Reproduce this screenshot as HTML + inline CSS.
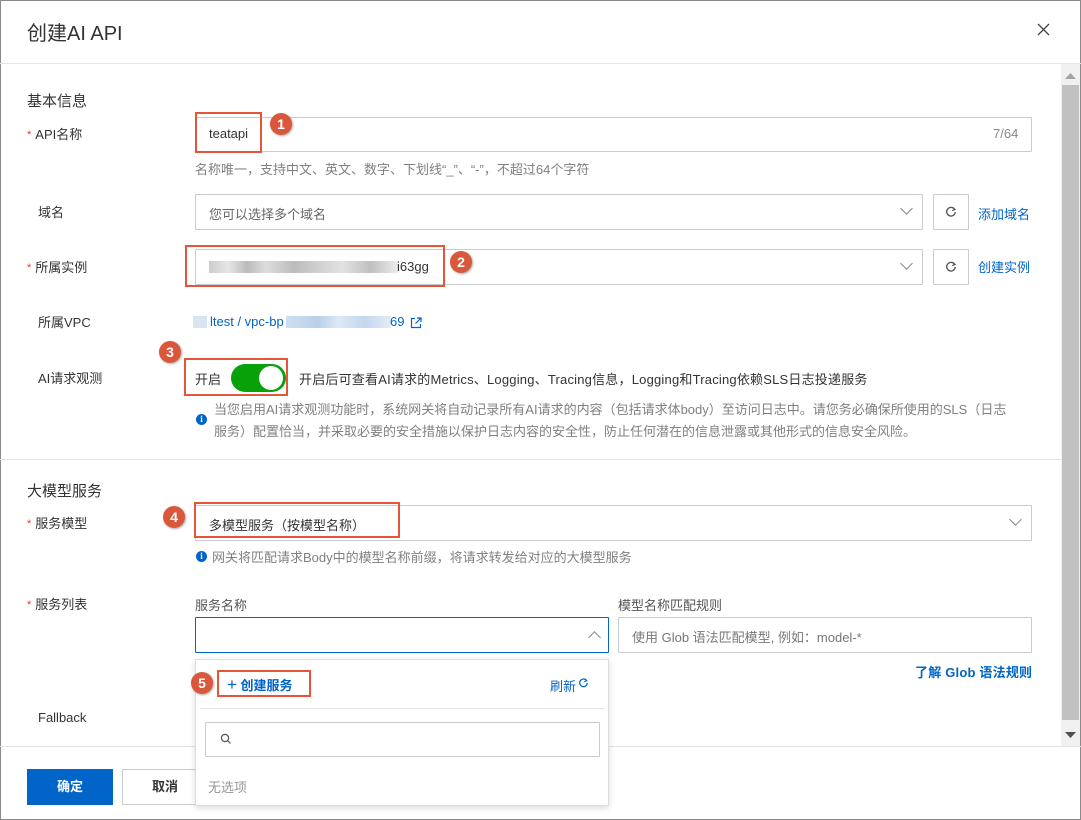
<!DOCTYPE html>
<html><head><meta charset="utf-8"><style>
*{margin:0;padding:0;box-sizing:border-box}
body{width:1081px;height:820px;overflow:hidden;background:#fff;font-family:"Liberation Sans","Noto Sans CJK SC",sans-serif;font-size:13px;color:#333;position:relative}
.a{position:absolute;white-space:nowrap}
.frame{position:absolute;left:0;top:0;width:1081px;height:820px;border:1px solid #8a8a8a}
.inp{position:absolute;border:1px solid #c8ccd2;background:#fff;border-radius:1px}
.lbl{position:absolute;font-size:13px;color:#333;line-height:16px}
.req{color:#e23b2e;font-size:11px;margin-right:4px;vertical-align:top}
.red{position:absolute;border:2px solid #e5553a}
.badge{position:absolute;width:22px;height:22px;border-radius:50%;background:#d9573b;color:#fff;font-weight:bold;font-size:14px;line-height:22px;text-align:center;box-shadow:1px 1px 2px rgba(0,0,0,.35)}
.hint{position:absolute;font-size:13px;color:#808080;white-space:nowrap}
.blue{color:#0064c8}
.chev{position:absolute;width:9px;height:9px;border-right:1.5px solid #888;border-bottom:1.5px solid #888;transform:rotate(45deg)}
.info{position:absolute;width:11px;height:11px;border-radius:50%;background:#0064c8;color:#fff;font-size:9px;font-weight:bold;line-height:11px;text-align:center;font-family:"Liberation Serif",serif}
.blur{position:absolute;height:12px}
</style></head><body>
<div class="frame"></div>
<div class="a" style="left:27px;top:17px;font-size:20px;color:#333">创建AI API</div>
<svg class="a" style="left:1037px;top:23px" width="13" height="13"><path d="M1 1L12 12M12 1L1 12" stroke="#444" stroke-width="1.3"/></svg>
<div class="a" style="left:0;top:63px;width:1081px;height:1px;background:#e3e3e3"></div>

<div class="a" style="left:1061px;top:64px;width:19px;height:682px;background:#f0f0f0"></div>
<div class="a" style="left:1062px;top:85px;width:17px;height:635px;background:#c1c1c1"></div>
<svg class="a" style="left:1065px;top:73px" width="11" height="6"><path d="M0 6L5.5 0L11 6Z" fill="#a3a3a3"/></svg>
<svg class="a" style="left:1065px;top:732px" width="11" height="6"><path d="M0 0L5.5 6L11 0Z" fill="#505050"/></svg>

<div class="a" style="left:27px;top:90px;font-size:15px;color:#333">基本信息</div>

<div class="lbl" style="left:27px;top:127px"><span class="req">*</span>API名称</div>
<div class="inp" style="left:195px;top:117px;width:837px;height:35px"></div>
<div class="a" style="left:209px;top:126px">teatapi</div>
<div class="a" style="left:993px;top:126px;color:#888">7/64</div>
<div class="red" style="left:195px;top:112px;width:67px;height:41px"></div>
<div class="badge" style="left:270px;top:113px">1</div>
<div class="hint" style="left:195px;top:159px">名称唯一，支持中文、英文、数字、下划线“_”、“-”，不超过64个字符</div>

<div class="lbl" style="left:38px;top:205px">域名</div>
<div class="inp" style="left:195px;top:194px;width:728px;height:36px"></div>
<div class="a" style="left:209px;top:204px;color:#666">您可以选择多个域名</div>
<div class="chev" style="left:902px;top:204px"></div>
<div class="inp" style="left:933px;top:194px;width:36px;height:36px"></div>
<svg class="a" style="left:945px;top:206px" width="12" height="12"><path d="M9.5 3.2A4.3 4.3 0 1 0 10.3 6" fill="none" stroke="#555" stroke-width="1.3"/><path d="M7.5 1.2L10 3.5L7.2 4.6" fill="none" stroke="#555" stroke-width="1.2"/></svg>
<div class="a blue" style="left:978px;top:204px">添加域名</div>

<div class="lbl" style="left:27px;top:260px"><span class="req">*</span>所属实例</div>
<div class="inp" style="left:195px;top:249px;width:728px;height:36px"></div>
<div class="blur" style="left:209px;top:261px;width:190px;background:linear-gradient(90deg,#ccc,#e6e6e6 10%,#bbb 20%,#ddd 30%,#bcbcbc 45%,#ccc 55%,#e2e2e2 70%,#c0c0c0 85%,#eee)"></div>
<div class="a" style="left:397px;top:259px">i63gg</div>
<div class="chev" style="left:902px;top:259px"></div>
<div class="inp" style="left:933px;top:249px;width:36px;height:36px"></div>
<svg class="a" style="left:945px;top:261px" width="12" height="12"><path d="M9.5 3.2A4.3 4.3 0 1 0 10.3 6" fill="none" stroke="#555" stroke-width="1.3"/><path d="M7.5 1.2L10 3.5L7.2 4.6" fill="none" stroke="#555" stroke-width="1.2"/></svg>
<div class="a blue" style="left:978px;top:257px">创建实例</div>
<div class="red" style="left:185px;top:245px;width:260px;height:42px"></div>
<div class="badge" style="left:450px;top:251px">2</div>

<div class="lbl" style="left:38px;top:315px">所属VPC</div>
<div class="blur" style="left:193px;top:316px;width:14px;background:#d8e4f2"></div>
<div class="a blue" style="left:210px;top:314px">ltest / vpc-bp</div>
<div class="blur" style="left:286px;top:316px;width:105px;background:linear-gradient(90deg,#cfdff0,#b9d0ea 30%,#dde8f4 50%,#c4d7ee 75%,#e3ecf6)"></div>
<div class="a blue" style="left:390px;top:314px">69</div>
<svg class="a" style="left:410px;top:317px" width="12" height="12"><path d="M5 1.5H1.5V10.5H10.5V7M7 1H11V5M11 1L5.5 6.5" fill="none" stroke="#0064c8" stroke-width="1.2"/></svg>

<div class="lbl" style="left:38px;top:371px">AI请求观测</div>
<div class="badge" style="left:159px;top:341px">3</div>
<div class="red" style="left:184px;top:358px;width:104px;height:38px"></div>
<div class="a" style="left:195px;top:369px">开启</div>
<div class="a" style="left:231px;top:364px;width:55px;height:28px;border-radius:14px;background:#09a10a"></div>
<div class="a" style="left:259px;top:366px;width:24px;height:24px;border-radius:50%;background:#fff"></div>
<div class="a" style="left:299px;top:369px;letter-spacing:0.2px">开启后可查看AI请求的Metrics、Logging、Tracing信息，Logging和Tracing依赖SLS日志投递服务</div>
<div class="info" style="left:196px;top:414px">i</div>
<div class="hint" style="left:214px;top:399px;line-height:22px">当您启用AI请求观测功能时，系统网关将自动记录所有AI请求的内容（包括请求体body）至访问日志中。请您务必确保所使用的SLS（日志<br>服务）配置恰当，并采取必要的安全措施以保护日志内容的安全性，防止任何潜在的信息泄露或其他形式的信息安全风险。</div>

<div class="a" style="left:0;top:459px;width:1061px;height:1px;background:#e3e3e3"></div>

<div class="a" style="left:27px;top:480px;font-size:15px">大模型服务</div>

<div class="lbl" style="left:27px;top:516px"><span class="req">*</span>服务模型</div>
<div class="inp" style="left:195px;top:505px;width:837px;height:36px"></div>
<div class="a" style="left:209px;top:515px">多模型服务（按模型名称）</div>
<div class="chev" style="left:1011px;top:515px"></div>
<div class="red" style="left:194px;top:502px;width:206px;height:36px"></div>
<div class="badge" style="left:163px;top:506px">4</div>
<div class="info" style="left:196px;top:551px">i</div>
<div class="hint" style="left:212px;top:547px">网关将匹配请求Body中的模型名称前缀，将请求转发给对应的大模型服务</div>

<div class="lbl" style="left:27px;top:597px"><span class="req">*</span>服务列表</div>
<div class="a" style="left:195px;top:595px;color:#555">服务名称</div>
<div class="a" style="left:618px;top:595px;color:#555">模型名称匹配规则</div>
<div class="inp" style="left:195px;top:617px;width:414px;height:36px;border-color:#0064c8"></div>
<div class="chev" style="left:590px;top:633px;transform:rotate(225deg)"></div>
<div class="inp" style="left:618px;top:617px;width:414px;height:36px"></div>
<div class="a" style="left:632px;top:627px;color:#777">使用 Glob 语法匹配模型, 例如：model-*</div>
<div class="a blue" style="left:915px;top:662px;font-weight:bold;letter-spacing:0.2px">了解 Glob 语法规则</div>

<div class="lbl" style="left:38px;top:710px">Fallback</div>

<div class="a" style="left:0;top:746px;width:1081px;height:1px;background:#e3e3e3"></div>
<div class="a" style="left:27px;top:769px;width:86px;height:36px;background:#0064c8;color:#fff;font-weight:bold;text-align:center;line-height:36px">确定</div>
<div class="a" style="left:122px;top:769px;width:86px;height:36px;border:1px solid #c8ccd2;font-weight:bold;text-align:center;line-height:34px">取消</div>

<div class="a" style="left:195px;top:659px;width:414px;height:147px;background:#fff;border:1px solid #ddd;box-shadow:0 2px 6px rgba(0,0,0,.15)"></div>
<div class="a" style="left:200px;top:708px;width:404px;height:1px;background:#e3e3e3"></div>
<div class="red" style="left:217px;top:670px;width:94px;height:27px"></div>
<div class="a blue" style="left:227px;top:675px;font-weight:bold"><span style="font-size:17px;font-weight:normal;line-height:14px">+</span> 创建服务</div>
<div class="badge" style="left:191px;top:672px">5</div>
<div class="a blue" style="left:550px;top:676px">刷新</div>
<svg class="a" style="left:578px;top:678px" width="11" height="11"><path d="M8.5 2.5A3.8 3.8 0 1 0 9.3 5" fill="none" stroke="#0064c8" stroke-width="1.2"/><path d="M6.5 0.6L8.8 2.7L6.2 3.8" fill="none" stroke="#0064c8" stroke-width="1.1"/></svg>
<div class="inp" style="left:205px;top:722px;width:395px;height:35px"></div>
<svg class="a" style="left:220px;top:733px" width="12" height="12"><circle cx="5" cy="5" r="3.6" fill="none" stroke="#555" stroke-width="1.2"/><path d="M7.6 7.6L10.5 10.5" stroke="#555" stroke-width="1.2"/></svg>
<div class="a" style="left:208px;top:777px;color:#999">无选项</div>
</body></html>
